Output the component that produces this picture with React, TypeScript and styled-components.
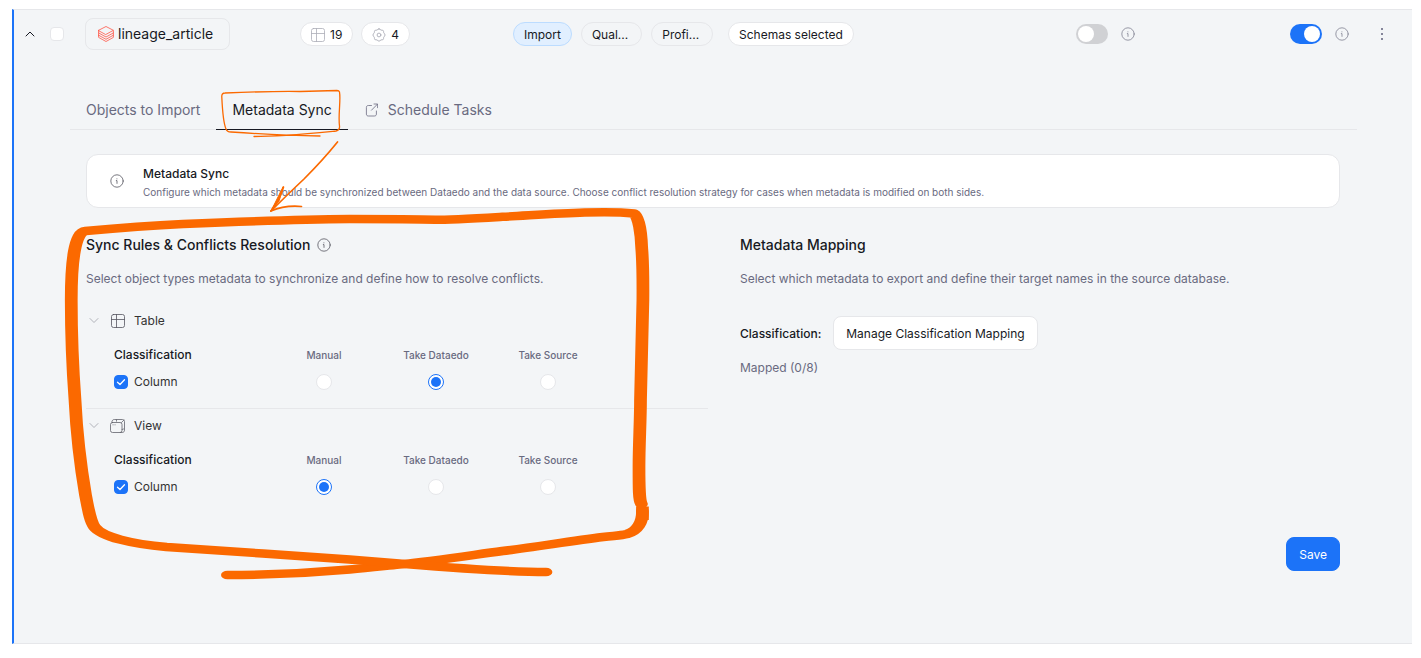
import React, { useState } from "react";
import styled, { createGlobalStyle, css } from "styled-components";

const ink = "#171923";
const muted = "#696a80";
const line = "#e6e7ea";
const blue = "#1c73f8";
const surface = "#f3f5f7";
const orange = "#fb6900";

const GlobalStyle = createGlobalStyle`
  *, *::before, *::after { box-sizing: border-box; }
  body {
    margin: 0;
    background: #fff;
    color: ${ink};
    font-family: Inter, "Liberation Sans", sans-serif;
    font-size: 12px;
    line-height: 22px;
  }
  button, input { font: inherit; color: inherit; margin: 0; }
  button { cursor: pointer; }
  h2, p { margin: 0; }
`;

const Page = styled.div`
  padding: 9px 9px 14px 12px;
`;

const Panel = styled.section`
  position: relative;
  background: ${surface};
  border-top: 1px solid ${line};
  border-bottom: 1px solid ${line};
  border-left: 2px solid ${blue};
`;

const Header = styled.header`
  display: grid;
  grid-template-columns:
    36px 35px minmax(0, 215fr) minmax(0, 213fr) minmax(0, 215fr)
    minmax(0, 348fr) minmax(0, 214fr) minmax(0, 76fr) 46px;
  align-items: center;
  height: 48px;
`;

const IconButton = styled.button`
  display: flex;
  align-items: center;
  justify-content: center;
  width: 32px;
  height: 32px;
  padding: 0;
  border: 0;
  background: none;
`;

const Cluster = styled.div<{ $gap: number }>`
  display: flex;
  align-items: center;
  gap: ${(p) => p.$gap}px;
  white-space: nowrap;
`;

const NameChip = styled.button`
  display: inline-flex;
  align-items: center;
  justify-self: start;
  gap: 4px;
  height: 32px;
  padding: 0 16px 0 12px;
  border: 1px solid ${line};
  border-radius: 8px;
  background: none;
  font-size: 14px;
`;

type PillTone = "plain" | "filled" | "active";

const Pill = styled.button<{ $tone: PillTone }>`
  display: inline-flex;
  align-items: center;
  gap: 5px;
  height: 24px;
  padding: 1px 10px 0;
  border: 1px solid ${line};
  border-radius: 12px;
  background: ${(p) => (p.$tone === "filled" ? "#fff" : "none")};
  ${(p) =>
    p.$tone === "plain" &&
    css`
      padding-right: 13px;
    `}
  ${(p) =>
    p.$tone === "active" &&
    css`
      background: #e1efff;
      border-color: #bcdcff;
    `}
`;

const Check = styled.input`
  appearance: none;
  display: block;
  flex: none;
  width: 14px;
  height: 14px;
  border: 1px solid ${line};
  border-radius: 4px;
  background: #fff;
  &:checked {
    border-color: ${blue};
    background: ${blue};
  }
`;

const CheckBox = styled.span`
  display: grid;
  place-items: center;
  flex: none;
  & > * { grid-area: 1 / 1; }
  & > svg { pointer-events: none; }
`;

const Switch = styled.input`
  appearance: none;
  display: flex;
  align-items: center;
  width: 32px;
  height: 20px;
  padding: 0 2px;
  border-radius: 10px;
  background: #d0d1d4;
  &::before {
    content: "";
    width: 16px;
    height: 16px;
    border-radius: 50%;
    background: #fff;
  }
  &:checked {
    justify-content: flex-end;
    background: ${blue};
  }
`;

const Radio = styled.input`
  appearance: none;
  display: grid;
  place-items: center;
  width: 16px;
  height: 16px;
  margin: 0 auto;
  border: 1px solid ${line};
  border-radius: 50%;
  background: #fff;
  &:checked { border-color: ${blue}; }
  &:checked::before {
    content: "";
    width: 10px;
    height: 10px;
    border-radius: 50%;
    background: ${blue};
  }
`;

const Body = styled.div`
  padding: 32px 55px 72px 56px;
`;

const Tabs = styled.div`
  display: flex;
  height: 40px;
  border-bottom: 1px solid ${line};
`;

const Tab = styled.button<{ $active?: boolean }>`
  display: flex;
  align-items: center;
  gap: 10px;
  height: 40px;
  padding: 0 16px;
  border: 0;
  border-bottom: 1px solid ${(p) => (p.$active ? ink : "transparent")};
  background: none;
  color: ${(p) => (p.$active ? ink : muted)};
  font-size: 14px;
  white-space: nowrap;
`;

const Content = styled.div`
  padding: 24px 17px 0 16px;
`;

const Notice = styled.div`
  display: flex;
  align-items: center;
  gap: 19px;
  min-height: 54px;
  padding: 0 23px;
  border: 1px solid ${line};
  border-radius: 12px;
  background: #fff;
`;

const NoticeBody = styled.div`
  padding: 10px 0 6px;
`;

const NoticeTitle = styled.div`
  line-height: 18px;
  font-weight: 500;
`;

const NoticeText = styled.p`
  color: ${muted};
  font-size: 10px;
  line-height: 18px;
`;

const Columns = styled.div`
  display: grid;
  grid-template-columns: minmax(0, 622fr) minmax(0, 600fr);
  gap: 32px;
  padding-top: 26px;
`;

const Heading = styled.h2`
  display: flex;
  align-items: center;
  gap: 7px;
  font-size: 14px;
  font-weight: 500;
`;

const Hint = styled.p<{ $top: number }>`
  margin-top: ${(p) => p.$top}px;
  color: ${muted};
`;

const Groups = styled.div`
  margin-top: 14px;
`;

const Group = styled.div`
  padding-bottom: 16px;
  & + & { border-top: 1px solid ${line}; }
`;

const GroupToggle = styled.button`
  display: flex;
  align-items: center;
  gap: 8px;
  height: 34px;
  padding: 0;
  border: 0;
  background: none;
  color: #333;
`;

const GroupIcon = styled.span`
  display: flex;
  justify-content: center;
  width: 16px;
`;

const Rules = styled.table`
  width: 490px;
  margin-left: 28px;
  table-layout: fixed;
  border-collapse: collapse;
  th, td { padding: 0; text-align: center; }
  thead th {
    height: 34px;
    width: 112px;
    color: ${muted};
    font-size: 10px;
    font-weight: 500;
  }
  thead th:first-child {
    width: 154px;
    color: ${ink};
    font-size: 12px;
    text-align: left;
  }
  tbody td, tbody th {
    height: 20px;
    line-height: 20px;
    font-weight: 400;
  }
`;

const RowLabel = styled.label`
  display: flex;
  align-items: center;
  gap: 6px;
  color: #333;
`;

const MappingRow = styled.div`
  display: flex;
  align-items: center;
  gap: 12px;
  margin-top: 26px;
`;

const Term = styled.span`
  padding-top: 1px;
  font-weight: 500;
`;

const Button = styled.button<{ $primary?: boolean }>`
  height: 34px;
  padding: 1px 12px 0;
  border: 1px solid ${(p) => (p.$primary ? blue : line)};
  border-radius: 8px;
  background: ${(p) => (p.$primary ? blue : "#fff")};
  color: ${(p) => (p.$primary ? "#fff" : ink)};
`;

const Footer = styled.footer`
  display: flex;
  justify-content: flex-end;
  padding-top: 24px;
`;

const Markup = styled.svg`
  position: absolute;
  top: 70px;
  left: 46px;
  pointer-events: none;
`;

const Icon = styled.svg`
  display: block;
  flex: none;
  fill: none;
  stroke: currentColor;
  stroke-linecap: round;
  stroke-linejoin: round;
`;

function InfoIcon({ color = "#55565f" }: { color?: string }) {
  return (
    <Icon width="14" height="14" viewBox="0 0 14 14" color={color} aria-hidden>
      <circle cx="7" cy="7" r="6.2" strokeWidth="0.8" />
      <path d="M6.3 6.600h.7v2.800M6.900 4.800v.1" strokeWidth="0.8" />
    </Icon>
  );
}

function TableIcon({ color }: { color: string }) {
  return (
    <Icon width="14" height="14" viewBox="0 0 14 14" color={color} aria-hidden>
      <rect x="0.5" y="0.5" width="13" height="13" rx="2" strokeWidth="0.8" />
      <path d="M0.5 5.5h13M5.5 0.5v13" strokeWidth="0.8" />
    </Icon>
  );
}

function ViewIcon() {
  return (
    <Icon width="16" height="14" viewBox="0 0 16 14" color="#62636c" aria-hidden>
      <rect x="0.5" y="3.5" width="11.500" height="10" rx="2" strokeWidth="0.8" />
      <path
        d="M1.800 3.200C2.100 1.400 2.800 .5 4.300 .5h8c1.400 0 2.200.8 2.200 2.200v8.500c0 1.300-.8 2.200-2.200 2.300h-2"
        strokeWidth="0.8"
      />
      <path d="M6.500 .8v1.400M11.500 3.500l2.500-2.500M12 10.500l1.500-.5" strokeWidth="0.8" />
      <path d="M3 5.800h.1M5 5.800h.1" strokeWidth="0.8" />
    </Icon>
  );
}

function GearIcon() {
  return (
    <Icon width="14" height="14" viewBox="0 0 14 14" color="#acadb7" aria-hidden>
      <circle cx="7" cy="7" r="1.900" strokeWidth="0.9" />
      <path
        d="M7 .8c.9 0 1.300 1 2 1.300.8.3 1.600-.2 2.200.4s.2 1.400.5 2.200c.3.700 1.400 1.300 1.400 2.300s-1.100 1.500-1.400 2.300c-.3.700.1 1.600-.5 2.200s-1.400.1-2.200.4c-.7.300-1.100 1.300-2 1.300s-1.300-1-2-1.300c-.8-.3-1.600.2-2.200-.4s-.2-1.500-.5-2.200C2 8.500.9 8 .9 7S2 5.400 2.300 4.700c.3-.8-.1-1.600.5-2.200s1.400-.1 2.200-.4c.7-.3 1.100-1.300 2-1.300z"
        strokeWidth="0.9"
      />
    </Icon>
  );
}

function StackIcon() {
  return (
    <Icon width="16" height="16" viewBox="0 0 16 16" color="#ff5546" aria-hidden>
      <path
        d="M.6 4.300 8 .5l7.400 3.800L8 8.400zM.6 4.300v2.600L8 11l7.400-4.100V4.800M.6 9.200 8 13.300l7.400-4.100V6.900M.6 9.200v2.200L8 15.500l7.400-4.100V9.200M.6 6.900v2.300"
        strokeWidth="0.8"
      />
    </Icon>
  );
}

function LinkOutIcon() {
  return (
    <Icon width="14" height="14" viewBox="0 0 14 14" aria-hidden>
      <path
        d="M7.500 2.500H4.300C3 2.500 2.400 3.300 2.400 4.500V11c0 1.300.7 2 2 2h6c1.300 0 2-.7 2-2V8M10 1h3.600v3.700M13.400 1.200 7.500 7.200"
        strokeWidth="0.8"
      />
    </Icon>
  );
}

function Chevron({ up }: { up?: boolean }) {
  return up ? (
    <Icon width="10" height="6" viewBox="0 0 10 6" color={ink} aria-hidden>
      <path d="M1 5l4-4 4 4" strokeWidth="1" />
    </Icon>
  ) : (
    <Icon width="16" height="16" viewBox="0 0 16 16" color="#a9aab2" aria-hidden>
      <path d="M4 5.500l4 4 4-4" strokeWidth="0.9" />
    </Icon>
  );
}

function Tick() {
  return (
    <Icon width="14" height="14" viewBox="0 0 14 14" color="#fff" aria-hidden>
      <path d="M3.500 7.200 6 9.500l4.500-4.800" strokeWidth="1.300" />
    </Icon>
  );
}

const strategies = ["Manual", "Take Dataedo", "Take Source"];

interface RuleGroupProps {
  name: string;
  icon: React.ReactNode;
  initial: string;
}

function RuleGroup({ name, icon, initial }: RuleGroupProps) {
  const [open, setOpen] = useState(true);
  const [enabled, setEnabled] = useState(true);
  const [strategy, setStrategy] = useState(initial);
  return (
    <Group>
      <GroupToggle type="button" aria-expanded={open} onClick={() => setOpen(!open)}>
        <Chevron />
        <GroupIcon>{icon}</GroupIcon>
        {name}
      </GroupToggle>
      {open && (
        <Rules>
          <thead>
            <tr>
              <th scope="col">Classification</th>
              {strategies.map((s) => (
                <th scope="col" key={s}>{s}</th>
              ))}
            </tr>
          </thead>
          <tbody>
            <tr>
              <th scope="row">
                <RowLabel>
                  <CheckBox>
                    <Check
                      type="checkbox"
                      checked={enabled}
                      onChange={(e) => setEnabled(e.target.checked)}
                    />
                    {enabled && <Tick />}
                  </CheckBox>
                  Column
                </RowLabel>
              </th>
              {strategies.map((s) => (
                <td key={s}>
                  <Radio
                    type="radio"
                    name={`${name}-strategy`}
                    aria-label={s}
                    checked={strategy === s}
                    onChange={() => setStrategy(s)}
                  />
                </td>
              ))}
            </tr>
          </tbody>
        </Rules>
      )}
    </Group>
  );
}

/* Hand-drawn highlights: a frame round the tab, an arrow, a frame round the rules. */
function Annotations() {
  return (
    <Markup width="600" height="510" viewBox="60 80 600 510" fill="none" stroke={orange} aria-hidden>
      <g strokeWidth="1.300" strokeLinecap="round" strokeLinejoin="round">
        <path d="M254 136.500C280 136.500 310 133.500 336 131Q340 130 339.500 126C338 115 341 100 339.500 92Q339 90.500 337 90.500L300 91.500C275 91 250 92 225 93Q221.500 93 221.800 97C222.300 108 223 122 226 129Q227 132 231 132C260 134 290 135.500 320 136" />
        <path d="M337.500 142C327 155 316 167 304 179Q286 196 271 211" strokeWidth="1.700" />
        <path d="M283.500 187C281 196 277 203 271 211C280 207 290 205.500 301.500 206.500" strokeWidth="1.700" />
        <path d="M283 187 274 205 270.500 211.500 279 201z" fill={orange} strokeWidth="1" />
      </g>
      <g transform="scale(1.5 1)" strokeWidth="8.500" strokeLinejoin="round">
        <path
          strokeLinecap="round"
          d="M151.600 575C178 575 207 573 233 569.500C246 568 256 566 266 564.500C290 561 315 555 335 551C355 547.500 380 541 402 537C411 535.500 414 535.500 418 534C425 531 428.500 522 428.300 511"
        />
        <path d="M428.300 520V506.500" />
        <path
          strokeLinecap="round"
          d="M427.600 504C426 500 426 490 426 467C426 445 427 420 427 400L428.600 300C428.700 280 428.500 260 427.800 248C427.500 235 426 216 422.500 213.500C400 210 360 215 335 216.800C315 218.500 300 219.800 290 219.800C275 219 260 219 233 219C200 219.500 170 221 122 224C100 225.500 75 228.500 57 231C50 232 47.500 260 47.500 300C47.500 340 48.500 370 50 400C51 430 53 460 57 495C59 510 60 521 63 527C68 537 88 544 111 547C140 550 200 556 233 559.500L266 563.500C295 567 335 572 364 572"
        />
      </g>
    </Markup>
  );
}

export default function App() {
  const [selected, setSelected] = useState(false);
  const [firstOn, setFirstOn] = useState(false);
  const [secondOn, setSecondOn] = useState(true);

  return (
    <>
      <GlobalStyle />
      <Page>
        <Panel>
          <Header>
            <IconButton type="button" aria-label="Collapse">
              <Chevron up />
            </IconButton>
            <Check
              type="checkbox"
              aria-label="Select source"
              checked={selected}
              onChange={(e) => setSelected(e.target.checked)}
            />
            <NameChip type="button">
              <StackIcon />
              lineage_article
            </NameChip>
            <Cluster $gap={8}>
              <Pill type="button" $tone="filled"><TableIcon color="#acadb7" />19</Pill>
              <Pill type="button" $tone="filled"><GearIcon />4</Pill>
            </Cluster>
            <Cluster $gap={9}>
              <Pill type="button" $tone="active">Import</Pill>
              <Pill type="button" $tone="plain">Qual...</Pill>
              <Pill type="button" $tone="plain">Profi...</Pill>
            </Cluster>
            <Cluster $gap={9}>
              <Pill type="button" $tone="filled">Schemas selected</Pill>
            </Cluster>
            <Cluster $gap={13}>
              <Switch
                type="checkbox"
                role="switch"
                aria-label="Profiling"
                checked={firstOn}
                onChange={(e) => setFirstOn(e.target.checked)}
              />
              <InfoIcon color="#7f8090" />
            </Cluster>
            <Cluster $gap={13}>
              <Switch
                type="checkbox"
                role="switch"
                aria-label="Sync"
                checked={secondOn}
                onChange={(e) => setSecondOn(e.target.checked)}
              />
              <InfoIcon color="#7f8090" />
            </Cluster>
            <IconButton type="button" aria-label="More">
              <Icon width="2" height="12" viewBox="0 0 2 12" color="#84859a" aria-hidden>
                <path d="M0 0h2v2H0zM0 5h2v2H0zM0 10h2v2H0z" fill="currentColor" stroke="none" />
              </Icon>
            </IconButton>
          </Header>

          <Body>
            <Tabs role="tablist">
              <Tab type="button" role="tab">Objects to Import</Tab>
              <Tab type="button" role="tab" aria-selected $active>Metadata Sync</Tab>
              <Tab type="button" role="tab"><LinkOutIcon />Schedule Tasks</Tab>
            </Tabs>

            <Content>
              <Notice>
                <InfoIcon />
                <NoticeBody>
                  <NoticeTitle>Metadata Sync</NoticeTitle>
                  <NoticeText>
                    Configure which metadata should be synchronized between Dataedo and the data
                    source. Choose conflict resolution strategy for cases when metadata is modified
                    on both sides.
                  </NoticeText>
                </NoticeBody>
              </Notice>

              <Columns>
                <section>
                  <Heading>Sync Rules &amp; Conflicts Resolution <InfoIcon /></Heading>
                  <Hint $top={12}>
                    Select object types metadata to synchronize and define how to resolve conflicts.
                  </Hint>
                  <Groups>
                    <RuleGroup
                      name="Table"
                      icon={<TableIcon color="#55565f" />}
                      initial="Take Dataedo"
                    />
                    <RuleGroup name="View" icon={<ViewIcon />} initial="Manual" />
                  </Groups>
                </section>
                <section>
                  <Heading>Metadata Mapping</Heading>
                  <Hint $top={12}>
                    Select which metadata to export and define their target names in the source
                    database.
                  </Hint>
                  <MappingRow>
                    <Term>Classification:</Term>
                    <Button type="button">Manage Classification Mapping</Button>
                  </MappingRow>
                  <Hint $top={7}>Mapped (0/8)</Hint>
                </section>
              </Columns>

              <Footer>
                <Button type="button" $primary>Save</Button>
              </Footer>
            </Content>
          </Body>
          <Annotations />
        </Panel>
      </Page>
    </>
  );
}
